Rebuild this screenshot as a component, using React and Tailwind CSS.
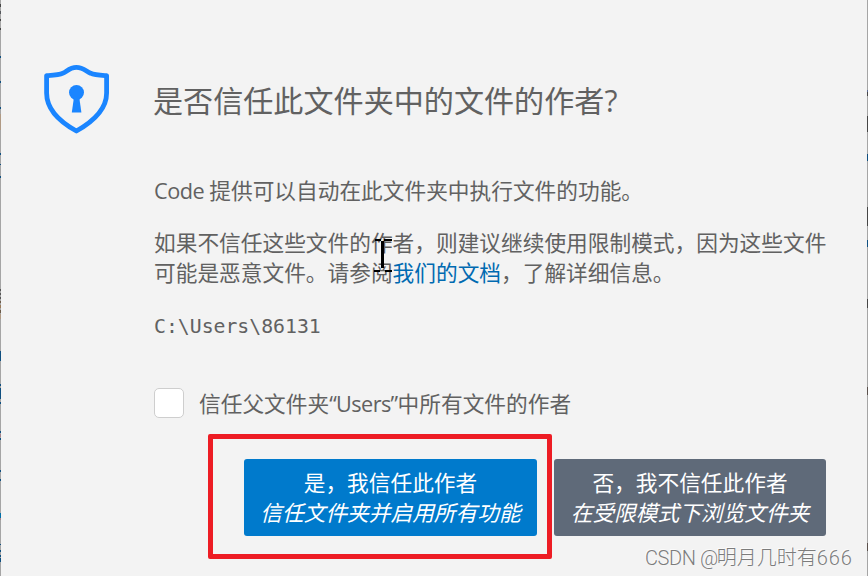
import React from 'react';

// [top, height, color] of the editor pixels showing at each side
const leftMarks = [
  [4, 3, '#454545'], [11, 3, '#55585c'], [19, 2, '#454545'], [28, 2, '#454545'],
  [56, 2, '#0f4f80'], [81, 2, '#0f4f80'], [107, 2, '#0f4f80'], [114, 16, '#b09a84'],
  [153, 2, '#0f4f80'], [164, 1, '#0f4f80'], [176, 2, '#0f4f80'], [289, 2, '#555555'],
  [293, 2, '#555555'], [297, 2, '#555555'], [301, 2, '#6b5a48'], [305, 3, '#9a7a58'],
  [310, 3, '#6b5a48'], [314, 5, '#b09a84'], [351, 10, '#0f4f80'], [384, 2, '#0f4f80'],
  [388, 11, '#0f4f80'], [402, 2, '#0f4f80'], [431, 2, '#0f4f80'], [434, 3, '#a5838a'],
  [438, 2, '#0f4f80'], [470, 2, '#0f4f80'], [479, 2, '#0f4f80'], [513, 5, '#006fa8'],
  [518, 2, '#a5838a'], [544, 1, '#0f4f80'], [550, 2, '#0f4f80'], [555, 2, '#0f4f80'],
  [558, 4, '#0f4f80'],
];

const rightMarks = [
  [90, 2, '#5b6a94'], [92, 4, '#454545'], [116, 16, '#454545'], [154, 7, '#0f4f80'],
  [207, 19, '#454545'], [240, 7, '#0f4f80'], [299, 9, '#454545'], [387, 8, '#5a504c'],
  [543, 8, '#5a504c'],
];

const EdgeStrip = ({ marks }) => (
  <svg className="h-full w-px shrink-0 bg-[#a5a5a5]" viewBox="0 0 1 576" shapeRendering="crispEdges">
    {marks.map(([y, h, color]) => (
      <rect key={y} x="0" y={y} width="1" height={h} fill={color} />
    ))}
  </svg>
);

const ShieldIcon = () => (
  <svg className="mt-[64px] ml-[42px] h-[70px] w-[70px] shrink-0" viewBox="0 0 70 70" fill="none">
    <path
      d="M33.4 3.4C27 3.4 24 7.2 20 9.2C16 11.2 10 11.3 3.6 11.6V29C3.6 46 18 58.5 33.4 67C48.5 58.5 63.6 46 63.6 29V11.6C57.5 11.3 51.5 11.2 47.5 9.2C43 7.2 40 3.4 33.4 3.4Z"
      stroke="#1a85ff"
      strokeWidth="4.8"
      strokeLinejoin="round"
    />
    <circle cx="33.5" cy="28.5" r="7.5" fill="#1a85ff" />
    <path d="M31 33H36.2L38.4 48.5H28.8Z" fill="#1a85ff" />
  </svg>
);

const TextCursor = () => (
  <svg className="absolute top-[237px] left-[373px] h-[36px] w-[20px]" viewBox="0 0 20 36" shapeRendering="crispEdges">
    <path d="M2 2H8V4H2ZM11 2H19V4H11ZM8 4H11V31H8ZM1 33H7V35H1ZM12 33H19V35H12Z" fill="#000" />
  </svg>
);

export default function App() {
  return (
    <div className="relative flex h-[576px] w-[868px] overflow-hidden bg-[#f3f3f3] font-['Open_Sans','Noto_Sans_CJK_SC',sans-serif] text-[21.7px] leading-[30px] whitespace-nowrap text-[#616161]">
      <EdgeStrip marks={leftMarks} />
      <ShieldIcon />

      <main className="ml-[41px] flex w-[672px] flex-col">
        <h1 className="mt-[81px] -ml-px text-[30.1px] leading-[40px]">是否信任此文件夹中的文件的作者?</h1>

        <p className="mt-[55px]">
          <span className="tracking-[-0.5px]">Code </span>提供可以自动在此文件夹中执行文件的功能。
        </p>
        <p className="mt-[22px]">
          如果不信任这些文件的作者，则建议继续使用限制模式，因为这些文件
          <br />
          可能是恶意文件。请参阅<a className="text-[#006ab1]">我们的文档</a>，了解详细信息。
        </p>
        <p className="mt-[24px] font-['DejaVu_Sans_Mono',monospace] text-[19.8px]">C:\Users\86131</p>

        <label className="mt-[46px] flex h-[30px] items-start gap-[15px]">
          <span className="h-[30px] w-[30px] rounded-[5px] border border-[#cecece] bg-white" />
          <span className="pt-px">
            信任父文件夹<span className="tracking-[-0.6px]">“Users”</span>中所有文件的作者
          </span>
        </label>

        <div className="mt-[41px] flex justify-end gap-[17px] text-white">
          <button className="h-[77px] w-[293px] rounded-[3px] bg-[#007acc]">
            <div>是，我信任此作者</div>
            <div className="italic">信任文件夹并启用所有功能</div>
          </button>
          <button className="h-[77px] w-[272px] rounded-[3px] bg-[#5f6a79]">
            <div>否，我不信任此作者</div>
            <div className="italic">在受限模式下浏览文件夹</div>
          </button>
        </div>
      </main>

      <div className="ml-auto flex">
        <EdgeStrip marks={rightMarks} />
      </div>

      {/* Highlight frame around the trust button */}
      <div className="absolute top-[434px] left-[208px] h-[125px] w-[344px] rounded-[2px] border-5 border-[#ed1c24]" />
      <TextCursor />
      <div className="absolute top-[543px] left-[645px] font-['Roboto','Noto_Sans_CJK_SC',sans-serif] text-[20px] font-light text-[#7c7c7c] [text-shadow:-1px_-1px_0_#ffffffb0]">
        <span className="tracking-[-0.4px]">CSDN </span>
        <span className="tracking-[-1.5px]">@</span>明月几时有
        <span className="tracking-[0.9px]">666</span>
      </div>
    </div>
  );
}
